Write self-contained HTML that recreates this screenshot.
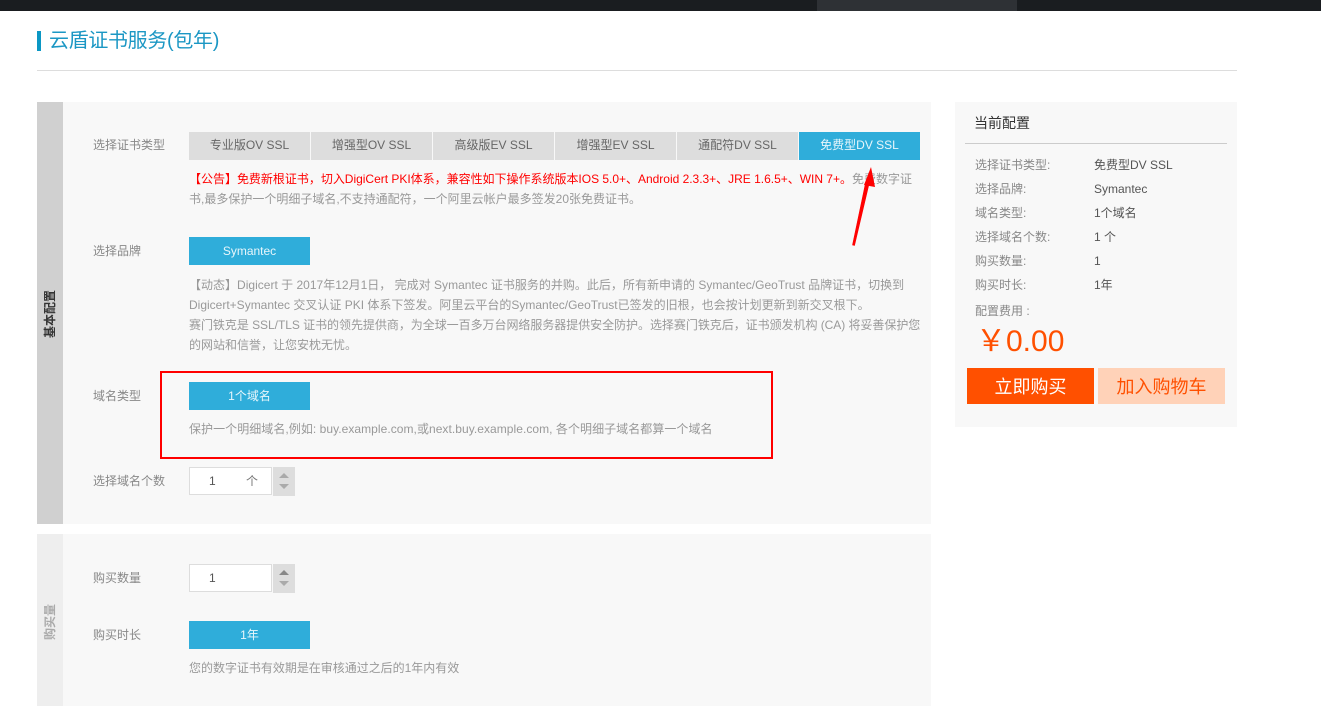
<!DOCTYPE html>
<html lang="zh"><head><meta charset="utf-8"><title>云盾证书服务(包年)</title>
<style>
html,body{margin:0;padding:0;background:#fff}
body{width:1321px;height:716px;position:relative;overflow:hidden;font-family:"Liberation Sans","Noto Sans CJK SC",sans-serif;font-size:12px;color:#999}
.a{position:absolute;white-space:nowrap}
.box{position:absolute}
.t{position:absolute;white-space:nowrap;height:20px;line-height:20px}
.lab{color:#888}
.tab{position:absolute;top:132px;width:121px;height:28px;line-height:27px;background:#ddd;color:#666;text-align:center}
.btn{position:absolute;left:189px;width:121px;height:28px;line-height:28px;background:#2fadda;color:#e8f6fb;text-align:center}
.input{position:absolute;left:189px;width:81px;height:26px;background:#fff;border:1px solid #ddd;line-height:26px;color:#555}
.spin{position:absolute;left:273px;width:22px;height:29px;background:#ddd}
.k{position:absolute;left:975px;color:#888;line-height:20px;height:20px;white-space:nowrap}
.v{position:absolute;left:1094px;color:#555;line-height:20px;height:20px;white-space:nowrap}
.side{position:absolute;transform:rotate(-90deg);white-space:nowrap;line-height:20px;height:20px;text-align:center}
</style></head><body>
<div class="box" style="left:0;top:0;width:1321px;height:11px;background:#1a1d20"></div>
<div class="box" style="left:817px;top:0;width:200px;height:11px;background:#2e3135"></div>

<div class="box" style="left:37px;top:31px;width:4px;height:20px;background:#0b97c4"></div>
<div class="a" style="left:49px;top:27px;font-size:20px;line-height:28px;color:#1b97c4;letter-spacing:-0.33px">云盾证书服务(包年)</div>
<div class="box" style="left:37px;top:70px;width:1200px;height:1px;background:#ddd"></div>

<div class="box" style="left:37px;top:102px;width:894px;height:422px;background:#f8f8f8"></div>
<div class="box" style="left:37px;top:102px;width:26px;height:422px;background:#d0d0d0"></div>
<div class="side" style="left:26px;top:304px;width:48px;font-weight:bold;color:#333">基本配置</div>

<div class="box" style="left:37px;top:534px;width:894px;height:172px;background:#f8f8f8"></div>
<div class="box" style="left:37px;top:534px;width:26px;height:172px;background:#eee"></div>
<div class="side" style="left:32px;top:612px;width:36px;font-weight:bold;color:#aaa">购买量</div>

<div class="t lab" style="left:93px;top:135px">选择证书类型</div>
<div class="tab" style="left:189px">专业版OV SSL</div>
<div class="tab" style="left:311px">增强型OV SSL</div>
<div class="tab" style="left:433px">高级版EV SSL</div>
<div class="tab" style="left:555px">增强型EV SSL</div>
<div class="tab" style="left:677px">通配符DV SSL</div>
<div class="tab" style="left:799px;background:#2fadda;color:#e8f6fb">免费型DV SSL</div>

<div class="t" style="left:189px;top:169px;width:731px"><span style="color:#f00;letter-spacing:-0.015px">【公告】免费新根证书，切入DigiCert PKI体系，兼容性如下操作系统版本IOS 5.0+、Android 2.3.3+、JRE 1.6.5+、WIN 7+。</span>免费数字证</div>
<div class="t" style="left:189px;top:189px">书,最多保护一个明细子域名,不支持通配符，一个阿里云帐户最多签发20张免费证书。</div>

<div class="t lab" style="left:93px;top:241px">选择品牌</div>
<div class="btn" style="top:237px">Symantec</div>
<div class="t" style="left:189px;top:275px;letter-spacing:0.01px">【动态】Digicert 于 2017年12月1日， 完成对 Symantec 证书服务的并购。此后，所有新申请的 Symantec/GeoTrust 品牌证书，切换到</div>
<div class="t" style="left:189px;top:295px">Digicert+Symantec 交叉认证 PKI 体系下签发。阿里云平台的Symantec/GeoTrust已签发的旧根，也会按计划更新到新交叉根下。</div>
<div class="t" style="left:189px;top:315px;letter-spacing:-0.04px">赛门铁克是 SSL/TLS 证书的领先提供商，为全球一百多万台网络服务器提供安全防护。选择赛门铁克后，证书颁发机构 (CA) 将妥善保护您</div>
<div class="t" style="left:189px;top:335px">的网站和信誉，让您安枕无忧。</div>

<div class="t lab" style="left:93px;top:386px">域名类型</div>
<div class="btn" style="top:382px">1个域名</div>
<div class="t" style="left:189px;top:419px;letter-spacing:0.05px">保护一个明细域名,例如: buy.example.com,或next.buy.example.com, 各个明细子域名都算一个域名</div>
<div class="box" style="left:160px;top:371px;width:609px;height:84px;border:2px solid #f00"></div>

<div class="t lab" style="left:93px;top:471px">选择域名个数</div>
<div class="input" style="top:467px"></div>
<div class="a" style="left:209px;top:471px;line-height:20px;color:#555">1</div>
<div class="a" style="left:246px;top:471px;line-height:20px;color:#777">个</div>
<div class="spin" style="top:467px"></div>
<svg class="box" style="left:273px;top:467px" width="22" height="29"><path d="M6 11 L11 6 L16 11Z M6 17 H16 L11 22Z" fill="#aaa"/></svg>

<div class="t lab" style="left:93px;top:568px">购买数量</div>
<div class="input" style="top:564px"></div>
<div class="a" style="left:209px;top:568px;line-height:20px;color:#555">1</div>
<div class="spin" style="top:564px"></div>
<svg class="box" style="left:273px;top:564px" width="22" height="29"><path d="M6 11 L11 6 L16 11Z" fill="#888"/><path d="M6 17 H16 L11 22Z" fill="#aaa"/></svg>

<div class="t lab" style="left:93px;top:625px">购买时长</div>
<div class="btn" style="top:621px">1年</div>
<div class="t" style="left:189px;top:658px;letter-spacing:-0.02px">您的数字证书有效期是在审核通过之后的1年内有效</div>

<svg class="box" style="left:840px;top:160px" width="45" height="90"><path d="M12.500 85 L14.500 85.500 L29 24 L25.500 23Z" fill="#f00" stroke="#f00" stroke-width="0.6" stroke-linejoin="round"/><path d="M31 7 L24 25 L35 27Z" fill="#f00"/></svg>

<div class="box" style="left:955px;top:102px;width:282px;height:325px;background:#f8f8f8"></div>
<div class="a" style="left:974px;top:113px;font-size:14px;line-height:20px;color:#333">当前配置</div>
<div class="box" style="left:965px;top:143px;width:262px;height:1px;background:#ccc"></div>
<div class="k" style="top:155px">选择证书类型:</div><div class="v" style="top:155px">免费型DV SSL</div>
<div class="k" style="top:179px">选择品牌:</div><div class="v" style="top:179px">Symantec</div>
<div class="k" style="top:203px">域名类型:</div><div class="v" style="top:203px">1个域名</div>
<div class="k" style="top:227px">选择域名个数:</div><div class="v" style="top:227px">1 个</div>
<div class="k" style="top:251px">购买数量:</div><div class="v" style="top:251px">1</div>
<div class="k" style="top:275px">购买时长:</div><div class="v" style="top:275px">1年</div>
<div class="k" style="top:301px">配置费用 :</div>
<div class="a" style="left:976px;top:322px;font-size:30px;line-height:40px;color:#ff5000">￥0.00</div>
<div class="box" style="left:967px;top:368px;width:127px;height:36px;line-height:39px;background:#ff5000;color:#fff;font-size:18px;text-align:center;overflow:hidden">立即购买</div>
<div class="box" style="left:1098px;top:368px;width:127px;height:36px;line-height:39px;background:#ffd2b8;color:#ff5000;font-size:18px;text-align:center;overflow:hidden">加入购物车</div>
</body></html>
